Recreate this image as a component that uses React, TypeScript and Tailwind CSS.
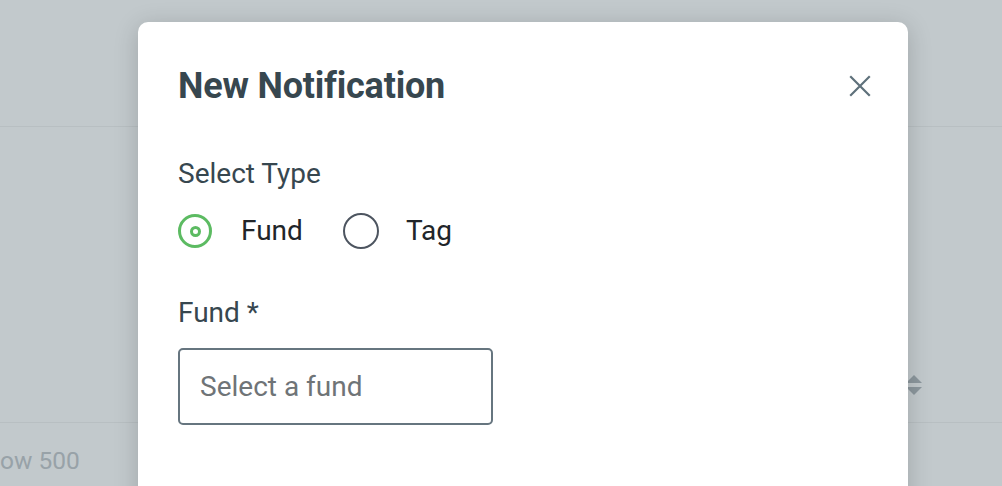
import React from "react";

export default function App() {
  return (
    <div className="relative w-[1002px] h-[486px] overflow-hidden bg-[#c2c9cc]" style={{ fontFamily: "Roboto, 'Noto Sans', sans-serif" }}>
      {/* background page (dimmed) */}
      <div className="flex flex-col">
        <div className="h-[127px] border-b border-[#b8bfc2]" />
        <div className="h-[296px] border-b border-[#b8bfc2] relative">
          <div className="absolute left-[906px] top-[248px] flex flex-col items-center gap-[4px]">
            <div className="w-0 h-0 border-l-[8px] border-r-[8px] border-b-[8px] border-l-transparent border-r-transparent border-b-[#8c979d]" />
            <div className="w-0 h-0 border-l-[8px] border-r-[8px] border-t-[8px] border-l-transparent border-r-transparent border-t-[#8c979d]" />
          </div>
        </div>
        <div className="ml-[-28px] pt-[26px] text-[24.5px] text-[#98a2a8] leading-none">Show 500</div>
      </div>

      {/* modal */}
      <div className="absolute left-[138px] top-[22px] w-[770px] h-[520px] bg-white rounded-[10px] shadow-[0_4px_24px_rgba(0,0,0,0.18)] px-[40px] pt-[46px]">
        <div className="flex items-center justify-between">
          <h2 className="text-[36px] font-bold text-[#37474f] leading-none tracking-[-0.2px]">New Notification</h2>
          <button className="mr-[-3px] text-[#5f717b]">
            <svg width="22" height="22" viewBox="0 0 22 22" fill="none" stroke="currentColor" strokeWidth="2.2" strokeLinecap="square">
              <path d="M2 2 L20 20 M20 2 L2 20" />
            </svg>
          </button>
        </div>

        <div className="mt-[56px] text-[28px] text-[#37474f] leading-none">Select Type</div>
        <div className="mt-[25px] flex items-center">
          <div className="flex items-center">
            <div className="w-[34px] h-[34px] rounded-full border-[3px] border-[#5cbb62] flex items-center justify-center">
              <div className="w-[11px] h-[11px] rounded-full border-[3px] border-[#5cbb62]" />
            </div>
            <span className="ml-[29px] text-[28px] text-[#212529] leading-none">Fund</span>
          </div>
          <div className="ml-[40px] flex items-center">
            <div className="w-[36px] h-[36px] rounded-full border-[2.5px] border-[#4d5560]" />
            <span className="ml-[27px] text-[28px] text-[#212529] leading-none">Tag</span>
          </div>
        </div>

        <div className="mt-[50px] text-[28px] text-[#37474f] leading-none">Fund *</div>
        <div className="mt-[21px] w-[315px] h-[77px] border-2 border-[#66757f] rounded-[5px] flex items-center px-[20px]">
          <span className="text-[28px] text-[#6f7477] leading-none">Select a fund</span>
        </div>
      </div>
    </div>
  );
}
